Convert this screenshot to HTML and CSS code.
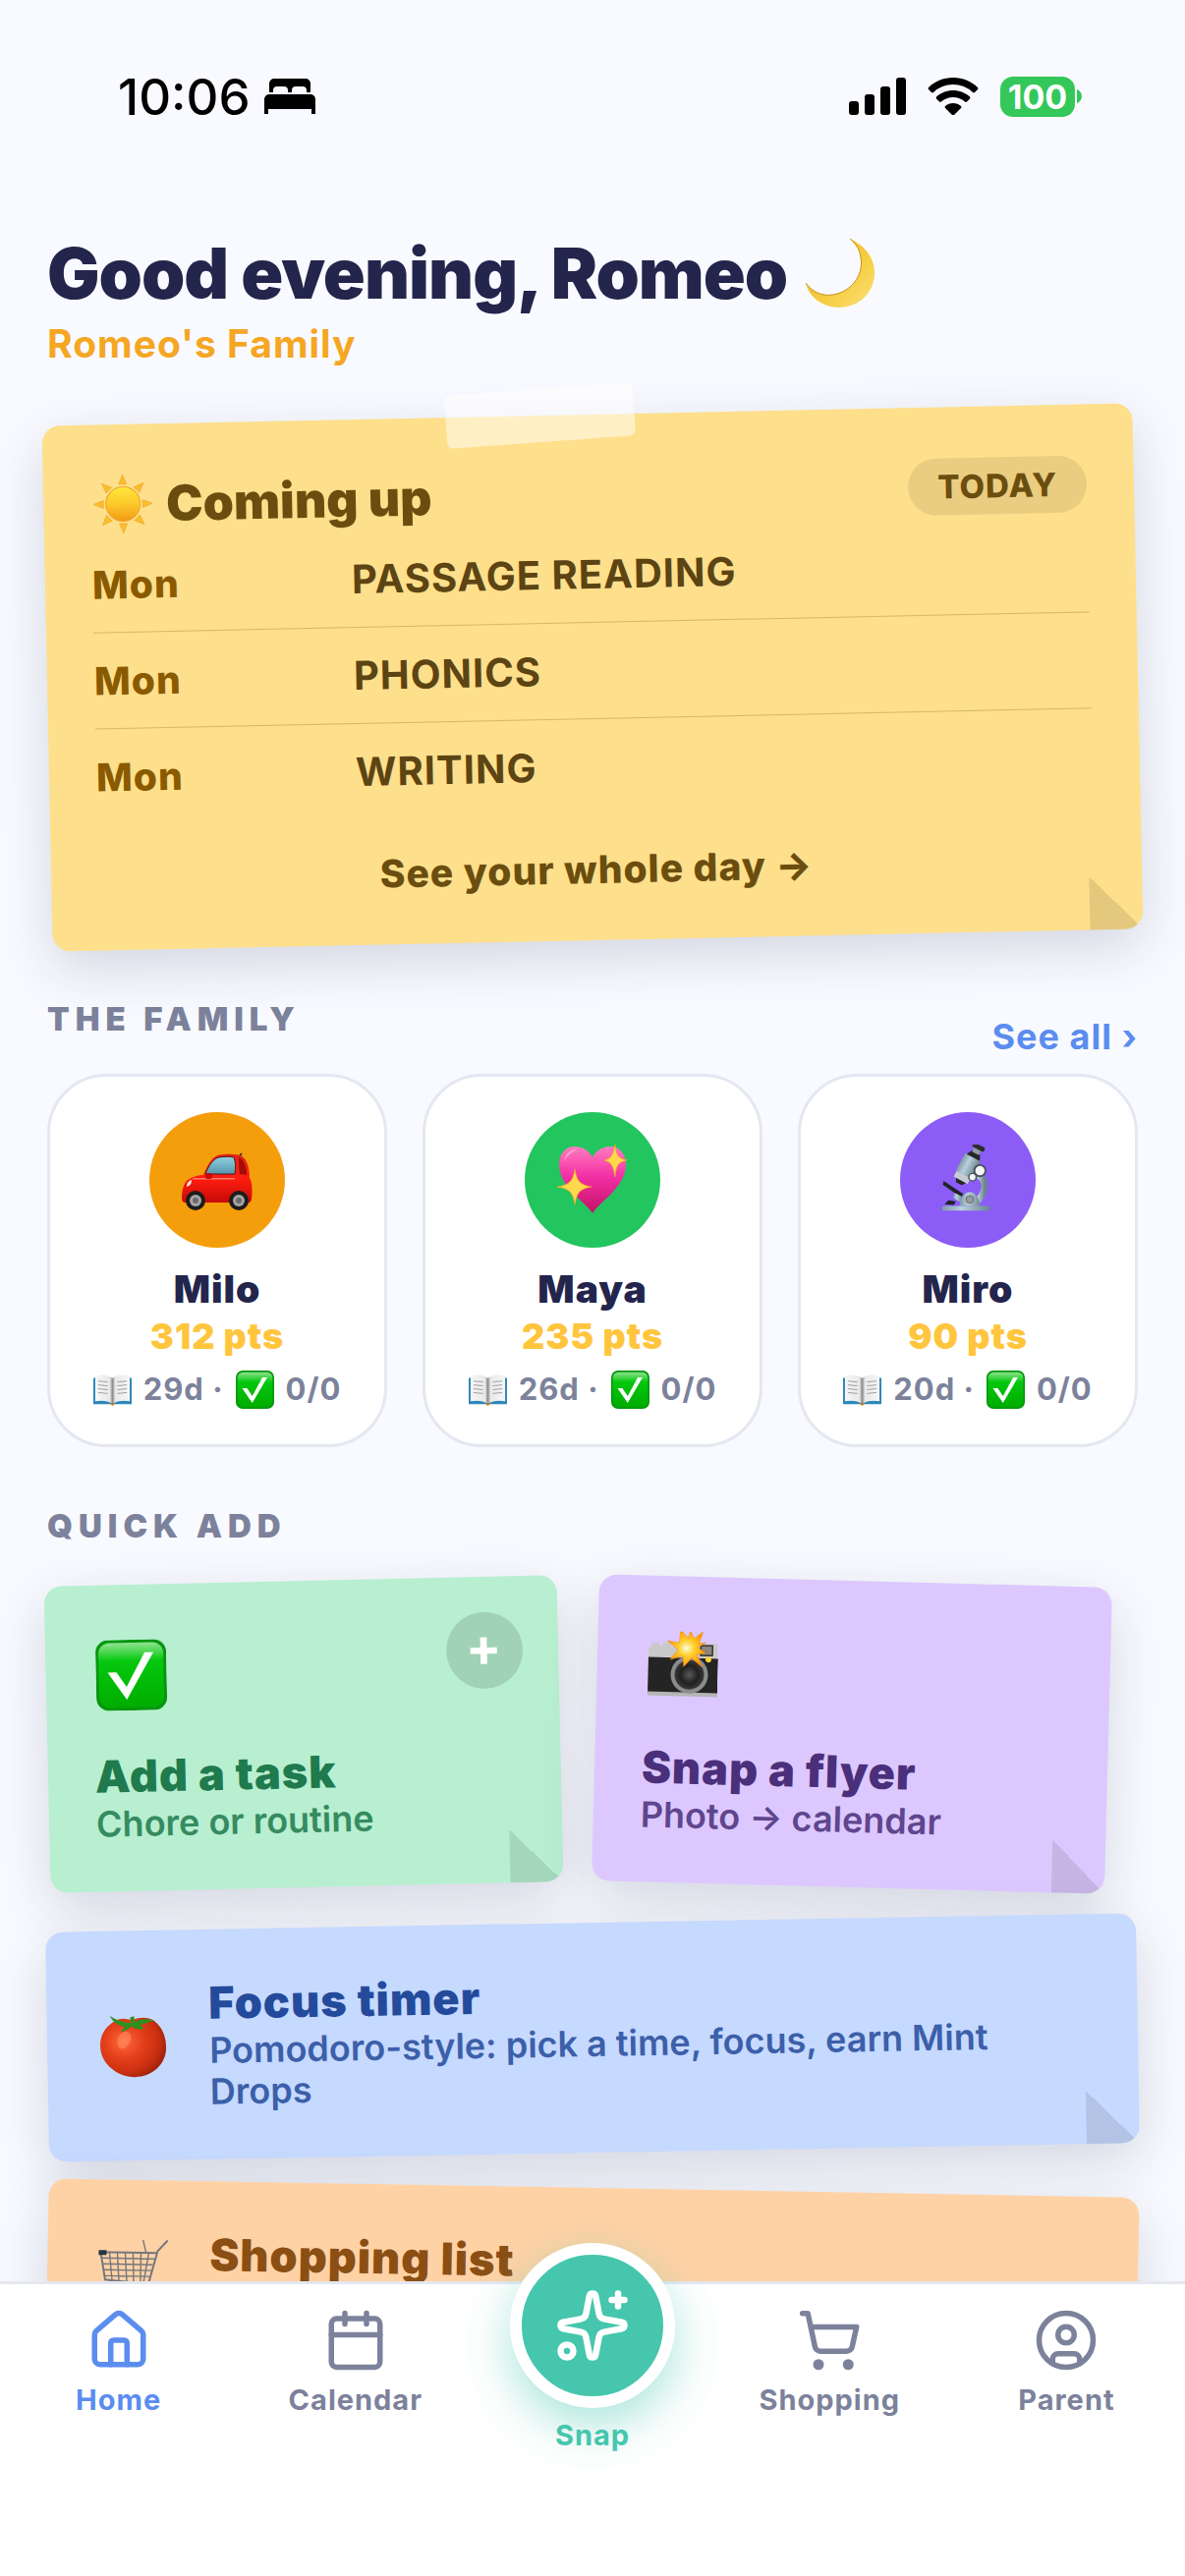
FILE: index.html
```html
<!DOCTYPE html>
<html lang="en">
  <head>
    <meta charset="UTF-8" />
    <meta name="viewport" content="width=device-width, initial-scale=1.0" />
    <title>Family Home</title>
    <link rel="stylesheet" href="styles.css">
  </head>
  <body>
    <svg class="sprite" aria-hidden="true">
      <defs>
        <linearGradient id="gMoon" x1="0" y1="0" x2="1" y2="1">
          <stop offset="0" stop-color="#e2b024" />
          <stop offset="0.6" stop-color="#f7cf43" />
          <stop offset="1" stop-color="#fbe07a" />
        </linearGradient>
        <linearGradient id="gSun" x1="0" y1="0" x2="0" y2="1">
          <stop offset="0" stop-color="#ffe83a" />
          <stop offset="0.5" stop-color="#fcc92a" />
          <stop offset="1" stop-color="#f09a16" />
        </linearGradient>
        <linearGradient id="gCar" x1="0" y1="0" x2="0" y2="1">
          <stop offset="0" stop-color="#e0231a" />
          <stop offset="0.5" stop-color="#ff1d10" />
          <stop offset="1" stop-color="#c40a06" />
        </linearGradient>
        <linearGradient id="gGlass" x1="0" y1="0" x2="0" y2="1">
          <stop offset="0" stop-color="#8fd0de" />
          <stop offset="1" stop-color="#5596ad" />
        </linearGradient>
        <linearGradient id="gHeart" x1="0" y1="0" x2="0" y2="1">
          <stop offset="0" stop-color="#ff7cc0" />
          <stop offset="0.45" stop-color="#f22fa5" />
          <stop offset="1" stop-color="#c51066" />
        </linearGradient>
        <linearGradient id="gSteel" x1="0" y1="0" x2="1" y2="0">
          <stop offset="0" stop-color="#7e99a8" />
          <stop offset="0.4" stop-color="#b8d0dc" />
          <stop offset="1" stop-color="#6c8490" />
        </linearGradient>
        <linearGradient id="gCheck" x1="0" y1="0" x2="0" y2="1">
          <stop offset="0" stop-color="#8fe38f" />
          <stop offset="0.28" stop-color="#05c80e" />
          <stop offset="1" stop-color="#00ac00" />
        </linearGradient>
        <linearGradient id="gPage" x1="0" y1="0" x2="1" y2="0">
          <stop offset="0" stop-color="#f6f6f6" />
          <stop offset="0.42" stop-color="#e9e9e9" />
          <stop offset="0.5" stop-color="#8d8d8d" />
          <stop offset="0.58" stop-color="#e9e9e9" />
          <stop offset="1" stop-color="#f6f6f6" />
        </linearGradient>
        <radialGradient id="gTomato" cx="0.36" cy="0.4" r="0.7">
          <stop offset="0" stop-color="#ff6a3c" />
          <stop offset="0.4" stop-color="#e5401c" />
          <stop offset="0.75" stop-color="#c9300f" />
          <stop offset="1" stop-color="#97200c" />
        </radialGradient>
        <radialGradient id="gLens">
          <stop offset="0" stop-color="#5a5a5a" />
          <stop offset="0.6" stop-color="#202020" />
          <stop offset="1" stop-color="#3a3a3a" />
        </radialGradient>
        <radialGradient id="gFlash">
          <stop offset="0" stop-color="#fffbe0" />
          <stop offset="0.4" stop-color="#ffd22e" />
          <stop offset="1" stop-color="#ff9408" />
        </radialGradient>
      </defs>

      <symbol id="moon" viewBox="0 0 72 72">
        <path fill="url(#gMoon)" d="M46 1C62 8 72 22 71 38C70 57 54 71 35 71C18 71 4 60 1 46C8 56 20 61 33 57C50 52 60 36 57 20C56 12 52 6 46 1z" />
        <path fill="none" stroke="#c9901a" stroke-width="1" d="M1 46C8 56 20 61 33 57C50 52 60 36 57 20C56 12 52 6 46 1" />
      </symbol>

      <symbol id="sun" viewBox="0 0 60 60">
        <g fill="#fbbd2c" stroke="#eda52a" stroke-width="0.6">
          <path id="ray" d="M30 0l4 10h-8z" />
          <use href="#ray" transform="rotate(45 30 30)" />
          <use href="#ray" transform="rotate(90 30 30)" />
          <use href="#ray" transform="rotate(135 30 30)" />
          <use href="#ray" transform="rotate(180 30 30)" />
          <use href="#ray" transform="rotate(225 30 30)" />
          <use href="#ray" transform="rotate(270 30 30)" />
          <use href="#ray" transform="rotate(315 30 30)" />
        </g>
        <circle cx="30" cy="30" r="17.500" fill="url(#gSun)" stroke="#f0a32a" stroke-width="1" />
      </symbol>

      <symbol id="car" viewBox="0 -9 72 72">
        <path d="M57 5l4-5" stroke="#222" stroke-width="1.500" />
        <path fill="url(#gCar)" d="M0 45C0 38 2 30 6 27C12 23 18 22 22 22C26 12 31 3 38 1.500C44 .5 52 .5 58 1.500C65 3 69 12 69 25C72 29 72 40 71 46C71 50 68 51 66 50H4C1 50 0 48 0 45z" />
        <path fill="url(#gGlass)" stroke="#5a1714" stroke-width="1" d="M24 21C27 13 32 5 38 4C43 3 49 3 53 4C55 9 55 15 54 21z" />
        <path fill="#a50b08" d="M58 4C64 7 66 15 66 22L59 21C58 15 58 9 58 4z" />
        <path fill="#ff7a6b" d="M12 25h42v1.500H10z" />
        <rect x="24" y="20" width="7" height="6" rx="2" fill="#c60c08" />
        <path fill="#ffe9dc" d="M5 34c0-4 2-6 5-7c0 4-2 6-5 7z" />
        <circle cx="14" cy="48" r="10" fill="#1c1c1c" />
        <circle cx="14" cy="48" r="6" fill="#a5a5a5" />
        <circle cx="14" cy="48" r="3" fill="#6a6a6a" />
        <circle cx="58" cy="48" r="10" fill="#1c1c1c" />
        <circle cx="58" cy="48" r="6" fill="#a5a5a5" />
        <circle cx="58" cy="48" r="3" fill="#6a6a6a" />
      </symbol>

      <symbol id="heart" viewBox="0 0 72 72">
        <path fill="url(#gHeart)" d="M36 70C31 60 2 44 2 20C2 9 9 2 18 2C27 2 33 7 36 13C39 7 45 2 54 2C63 2 70 9 70 20C70 44 41 60 36 70z" />
        <path fill="#ffb3da" opacity="0.7" d="M7 17C8 9 14 5 20 5C16 8 10 11 7 17z" />
        <g fill="#ffd84d" stroke="#f0a52a" stroke-width="0.700">
          <path d="M18 25C20 37 23 41 35 43C23 45 20 49 18 61C16 49 13 45 0 43C13 41 16 37 18 25z" />
          <path d="M59 0C60 11 62 14 71 16C62 18 60 21 59 33C57 21 55 18 48 16C55 14 57 11 59 0z" />
        </g>
      </symbol>

      <symbol id="microscope" viewBox="-4 -2 76 76">
        <path fill="none" stroke="url(#gSteel)" stroke-width="7" d="M42 29C57 36 54 52 40 62" />
        <path fill="#202426" d="M8 37l21 14l-2 4L7 41z" />
        <path fill="url(#gSteel)" d="M20 50l8 4l-2 6l-8-5z" />
        <path fill="url(#gSteel)" d="M25 64C27 53 31 49 37 49C43 50 46 56 48 64z" />
        <circle cx="36" cy="57" r="4" fill="#9b9b9b" stroke="#586770" stroke-width="1" />
        <rect x="6" y="64" width="52" height="5" rx="2" fill="url(#gSteel)" />
        <path fill="#202426" d="M9 62l4-4l8 1l-2 4z" />
        <g transform="rotate(28 30 26)">
          <rect x="22" y="8" width="19" height="22" rx="3" fill="url(#gSteel)" />
          <rect x="23" y="30" width="17" height="7" fill="#c6ccd0" />
          <path fill="#262626" d="M26 37h12l-3 4h-7z" />
          <path fill="#262626" d="M24 9h16l-3-6H27z" />
          <rect x="28" y="-2" width="8" height="6" fill="#8f9ba2" />
          <rect x="25" y="-6" width="14" height="5" rx="2" fill="#2b2b2b" />
        </g>
        <circle cx="47" cy="26" r="6" fill="#f4f4f4" stroke="#48525a" stroke-width="2" />
        <circle cx="39" cy="33" r="4" fill="#f4f4f4" stroke="#48525a" stroke-width="1.500" />
      </symbol>

      <symbol id="book" viewBox="0 0 40 40">
        <path fill="#2d86b8" d="M0 8l4-1v24l32 0V7l4 1v27H0z" />
        <path fill="url(#gPage)" d="M2 6C8 4 15 4 20 8C25 4 32 4 38 6V32C32 31 25 31 20 35C15 31 8 31 2 32z" />
        <path fill="none" stroke="#9c9c9c" stroke-width="1" d="M5 11l10 1M5 15l10 1M5 19l10 1M5 23l10 1M25 12l10-1M25 16l10-1M25 20l10-1M25 24l10-1" />
        <path fill="#b77a1e" d="M17 34h6l-3 3z" />
      </symbol>

      <symbol id="check" viewBox="0 0 72 72">
        <rect width="72" height="72" rx="13" fill="#07960f" />
        <rect x="3" y="3" width="66" height="66" rx="11" fill="url(#gCheck)" />
        <path fill="#fff" d="M12 33h9l10 15L50 13h9L31 61z" />
      </symbol>

      <symbol id="camera" viewBox="0 2 72 72">
        <path fill="#c9c9c9" d="M4 18v-4h8v3h3v-3h9v4h29v-4h18v18H1V20z" />
        <rect x="1" y="29" width="71" height="37" fill="#242424" />
        <rect x="1" y="64" width="71" height="4" fill="#b5b5b5" />
        <rect x="54" y="16" width="12" height="10" fill="#8f857a" stroke="#333" stroke-width="1.500" />
        <circle cx="43" cy="46" r="19" fill="#8a8c8e" />
        <circle cx="43" cy="46" r="15" fill="url(#gLens)" />
        <circle cx="62" cy="30" r="3" fill="#ffd22e" />
        <path fill="url(#gFlash)" stroke="#f58a08" stroke-width="0.500" d="M33 0l8 9l2-8l4 8l9-7l-4 12l7-1l-8 5l8 6l-9 1l6 13l-11-9l-8 9l-1-11l-13 4l8-10l-11-9l12 2z" />
      </symbol>

      <symbol id="tomato" viewBox="0 0 72 72">
        <path fill="url(#gTomato)" d="M16 12C25 6 30 9 36 10C44 7 52 7 58 11C67 18 70 28 70 38C70 56 55 68 38 68C20 68 3 54 3 36C3 26 7 18 16 12z" />
        <path fill="#ff9b72" opacity="0.45" d="M22 26c4-6 10-6 12-1c2 6-4 14-9 14c-5-1-6-8-3-13z" />
        <path fill="#2f8f1f" d="M34 13C26 12 18 9 13 5C17 13 22 15 28 17L24 22C29 21 32 19 35 16C38 19 43 20 48 19L44 15C49 14 54 12 58 11C51 8 43 9 38 12L38 6L34 7z" />
      </symbol>

      <symbol id="trolley" viewBox="0 0 72 72">
        <g fill="none" stroke="#74777d">
          <path stroke-width="2" d="M71 1L61 12L52 46L8 42L3 14H61" />
          <path stroke-width="1.400" d="M4 20h54M5 26h51M6 32h49M7 38h46M12 14l3 28M20 14l2 29M28 14l2 30M36 14l1 30M44 14v31M52 14l-5 31M46 1l3 12" />
          <path stroke-width="2.500" d="M50 46l-6 10H14" />
        </g>
        <rect x="1" y="12" width="8" height="5" fill="#26343c" />
        <circle cx="18" cy="64" r="5" fill="#444" />
        <circle cx="46" cy="64" r="5" fill="#444" />
      </symbol>
    </svg>

    <div class="app">
      <main class="screen">
        <div class="status-bar">
          <div class="status-left">
            <span class="clock">10:06</span>
            <svg class="bed-icon" viewBox="0 0 52 36">
              <path d="M5 14V5a5 5 0 0 1 5-5h32a5 5 0 0 1 5 5v9h-4v-2a4 4 0 0 0-4-4h-7a4 4 0 0 0-4 4v2h-4v-2a4 4 0 0 0-4-4h-7a4 4 0 0 0-4 4v2z" />
              <path d="M0 36V21a5 5 0 0 1 5-5h42a5 5 0 0 1 5 5v15h-4v-5H4v5z" />
            </svg>
          </div>
          <div class="status-right">
            <svg class="signal-icon" viewBox="0 0 58 38">
              <rect x="0" y="24" width="10" height="14" rx="3" />
              <rect x="16" y="17" width="10" height="21" rx="3" />
              <rect x="32" y="9" width="10" height="29" rx="3" />
              <rect x="48" y="0" width="10" height="38" rx="3" />
            </svg>
            <svg class="wifi-icon" viewBox="0 0 52 38">
              <path d="M26 0C36 0 45 4 51 10a1.500 1.500 0 0 1 0 2l-3 3a1.500 1.500 0 0 1-2 0a29 29 0 0 0-40 0a1.500 1.500 0 0 1-2 0l-3-3a1.500 1.500 0 0 1 0-2C7 4 16 0 26 0z" />
              <path d="M26 13C32.500 13 38.500 15.500 43 19.500a1.500 1.500 0 0 1 0 2l-3 3a1.500 1.500 0 0 1-2 0a18 18 0 0 0-24 0a1.500 1.500 0 0 1-2 0l-3-3a1.500 1.500 0 0 1 0-2C13.500 15.500 19.500 13 26 13z" />
              <path d="M26 26c3 0 6 1 8 3a1.500 1.500 0 0 1 0 2l-7 7a1.500 1.500 0 0 1-2 0l-7-7a1.500 1.500 0 0 1 0-2c2-2 5-3 8-3z" />
            </svg>
            <div class="battery">
              <span class="battery-level">100</span>
              <svg class="battery-tip" viewBox="0 0 5 14"><path d="M0 0c3 1 5 4 5 7s-2 6-5 7z" /></svg>
            </div>
          </div>
        </div>

        <header class="greeting">
          <h1>Good evening, Romeo <svg class="moon"><use href="#moon" /></svg></h1>
          <p>Romeo's Family</p>
        </header>

        <section class="note note-today">
          <span class="tape"></span>
          <div class="note-head">
            <h2><svg class="sun"><use href="#sun" /></svg>Coming up</h2>
            <span class="pill">TODAY</span>
          </div>
          <ul class="agenda">
            <li><span class="day">Mon</span><span class="event">PASSAGE READING</span></li>
            <li><span class="day">Mon</span><span class="event">PHONICS</span></li>
            <li><span class="day">Mon</span><span class="event">WRITING</span></li>
          </ul>
          <a class="day-link" href="#">See your whole day →</a>
          <span class="fold"></span>
        </section>

        <div class="section-head">
          <h3>THE FAMILY</h3>
          <a class="see-all" href="#">See all ›</a>
        </div>
        <div class="family">
          <a class="kid" href="#">
            <span class="avatar orange"><svg><use href="#car" /></svg></span>
            <span class="name">Milo</span>
            <span class="points">312 pts</span>
            <span class="stats"><svg><use href="#book" /></svg><span>29d ·</span><svg><use href="#check" /></svg><span>0/0</span></span>
          </a>
          <a class="kid" href="#">
            <span class="avatar green"><svg><use href="#heart" /></svg></span>
            <span class="name">Maya</span>
            <span class="points">235 pts</span>
            <span class="stats"><svg><use href="#book" /></svg><span>26d ·</span><svg><use href="#check" /></svg><span>0/0</span></span>
          </a>
          <a class="kid" href="#">
            <span class="avatar violet"><svg><use href="#microscope" /></svg></span>
            <span class="name">Miro</span>
            <span class="points">90 pts</span>
            <span class="stats"><svg><use href="#book" /></svg><span>20d ·</span><svg><use href="#check" /></svg><span>0/0</span></span>
          </a>
        </div>

        <div class="section-head">
          <h3>QUICK ADD</h3>
        </div>
        <div class="quick">
          <button type="button" class="note tile tile-task">
            <svg class="emoji"><use href="#check" /></svg>
            <span class="title">Add a task</span>
            <span class="sub">Chore or routine</span>
            <span class="plus">+</span>
            <span class="fold"></span>
          </button>
          <button type="button" class="note tile tile-snap">
            <svg class="emoji"><use href="#camera" /></svg>
            <span class="title">Snap a flyer</span>
            <span class="sub">Photo → calendar</span>
            <span class="fold"></span>
          </button>
          <button type="button" class="note wide wide-focus">
            <svg class="emoji"><use href="#tomato" /></svg>
            <span class="wide-text">
              <span class="title">Focus timer</span>
              <span class="sub">Pomodoro-style: pick a time, focus, earn Mint Drops</span>
            </span>
            <span class="fold"></span>
          </button>
          <button type="button" class="note wide wide-shopping">
            <svg class="emoji"><use href="#trolley" /></svg>
            <span class="wide-text">
              <span class="title">Shopping list</span>
            </span>
            <span class="fold"></span>
          </button>
        </div>
      </main>

      <nav class="tab-bar">
        <a class="tab active" href="#">
          <svg viewBox="0 0 24 24"><path d="M15 21v-8a1 1 0 0 0-1-1h-4a1 1 0 0 0-1 1v8" /><path d="M3 10a2 2 0 0 1 .709-1.528l7-5.999a2 2 0 0 1 2.582 0l7 5.999A2 2 0 0 1 21 10v9a2 2 0 0 1-2 2H5a2 2 0 0 1-2-2z" /></svg>
          <span>Home</span>
        </a>
        <a class="tab" href="#">
          <svg viewBox="0 0 24 24"><path d="M8 2v4M16 2v4M3 10h18" /><rect x="3" y="4" width="18" height="18" rx="2" /></svg>
          <span>Calendar</span>
        </a>
        <button type="button" class="tab snap">
          <span class="snap-circle">
            <svg viewBox="0 0 24 24"><path d="M11.017 2.814a1 1 0 0 1 1.966 0l1.051 5.558a2 2 0 0 0 1.594 1.594l5.558 1.051a1 1 0 0 1 0 1.966l-5.558 1.051a2 2 0 0 0-1.594 1.594l-1.051 5.558a1 1 0 0 1-1.966 0l-1.051-5.558a2 2 0 0 0-1.594-1.594l-5.558-1.051a1 1 0 0 1 0-1.966l5.558-1.051a2 2 0 0 0 1.594-1.594z" /><path d="M20 2v4M22 4h-4" /><circle cx="4" cy="20" r="2" /></svg>
          </span>
          <span>Snap</span>
        </button>
        <a class="tab" href="#">
          <svg viewBox="0 0 24 24"><circle cx="8" cy="21" r="1" /><circle cx="19" cy="21" r="1" /><path d="M2.050 2.050h2l2.660 12.420a2 2 0 0 0 2 1.580h9.780a2 2 0 0 0 1.950-1.570l1.650-7.430H5.120" /></svg>
          <span>Shopping</span>
        </a>
        <a class="tab" href="#">
          <svg viewBox="0 0 24 24"><circle cx="12" cy="12" r="10" /><circle cx="12" cy="10" r="3" /><path d="M7 20.662V19a2 2 0 0 1 2-2h6a2 2 0 0 1 2 2v1.662" /></svg>
          <span>Parent</span>
        </a>
      </nav>
    </div>
  </body>
</html>
```
FILE: styles.css
```css
* {
  box-sizing: border-box;
}
body {
  margin: 0;
  background-color: #f9faff;
  color: #23254d;
  font-family: Inter, "Liberation Sans", sans-serif;
  letter-spacing: 1px;
}
h1,
h2,
h3,
p,
ul {
  margin: 0;
  padding: 0;
}
a {
  color: inherit;
  text-decoration: none;
}
button {
  margin: 0;
  border: none;
  background: none;
  font-family: inherit;
  letter-spacing: inherit;
  text-align: left;
  cursor: pointer;
}
.sprite {
  position: absolute;
  width: 0;
  height: 0;
}

.app {
  display: flex;
  flex-direction: column;
  height: 100vh;
}
.screen {
  flex: 1;
  min-height: 0;
  padding: 0 48px 48px;
  overflow-x: hidden;
  overflow-y: auto;
  scrollbar-width: none;
}

/* Status bar */
.status-bar {
  display: flex;
  justify-content: space-between;
  align-items: center;
  height: 196px;
  padding: 0 57px 0 72px;
  letter-spacing: 0;
}
.status-left,
.status-right {
  display: flex;
  align-items: center;
  color: #000;
}
.status-left {
  gap: 14px;
}
.status-right {
  gap: 22px;
}
.clock {
  font-size: 51px;
  font-weight: 500;
}
.bed-icon {
  width: 52px;
  height: 36px;
}
.signal-icon {
  width: 58px;
  height: 38px;
}
.wifi-icon {
  width: 52px;
  height: 38px;
}
.battery {
  display: flex;
  align-items: center;
  gap: 2px;
}
.battery-level {
  width: 76px;
  border-radius: 13px;
  background-color: #34c759;
  color: white;
  font-size: 34px;
  font-weight: 700;
  line-height: 41px;
  text-align: center;
}
.battery-tip {
  width: 5px;
  height: 14px;
  fill: #34c759;
}

/* Greeting */
.greeting {
  padding: 40px 0 48px;
}
.greeting h1 {
  display: flex;
  align-items: center;
  gap: 18px;
  font-size: 71px;
  font-weight: 900;
  line-height: 84px;
  letter-spacing: -1px;
}
.moon {
  width: 72px;
  height: 72px;
}
.greeting p {
  margin-top: 6px;
  color: #f5a623;
  font-size: 39px;
  font-weight: 700;
  line-height: 48px;
}

/* Sticky notes */
.note {
  position: relative;
  padding: 48px;
  border-radius: 18px;
  box-shadow: 0 18px 54px rgba(20, 30, 70, 0.16);
}
.fold {
  position: absolute;
  right: 0;
  bottom: 0;
  width: 54px;
  height: 54px;
  border-bottom-right-radius: 18px;
  background: linear-gradient(45deg, rgba(0, 0, 0, 0.1) 50%, transparent 50%);
}
.note-today {
  background-color: #fedf8b;
  color: #6b4e0f;
  transform: rotate(-1.2deg);
}
.tape {
  position: absolute;
  top: -27px;
  left: 37%;
  width: 192px;
  height: 54px;
  border-radius: 6px;
  background-color: rgba(255, 255, 255, 0.5);
  transform: rotate(-3deg);
}
.note-head {
  display: flex;
  justify-content: space-between;
  align-items: center;
  height: 66px;
}
.note-head h2 {
  display: flex;
  align-items: center;
  gap: 14px;
  font-size: 50px;
  font-weight: 900;
  letter-spacing: 0;
}
.sun {
  width: 60px;
  height: 60px;
  margin-left: 3px;
}
.pill {
  padding: 0 30px;
  border-radius: 30px;
  background-color: rgba(0, 0, 0, 0.08);
  font-size: 33px;
  font-weight: 800;
  line-height: 58px;
}
.agenda {
  list-style: none;
}
.agenda li {
  display: flex;
  align-items: center;
  padding: 24px 0;
  border-bottom: 1px solid rgba(92, 68, 19, 0.25);
  line-height: 49px;
}
.agenda li:last-child {
  border-bottom: none;
}
.day {
  width: 264px;
  color: #8a5a00;
  font-size: 39px;
  font-weight: 800;
}
.event {
  color: #5c4413;
  font-size: 40px;
  font-weight: 700;
}
.day-link {
  display: block;
  margin-top: 32px;
  font-size: 39px;
  font-weight: 800;
  line-height: 48px;
  text-align: center;
}

/* Section titles */
.section-head {
  display: flex;
  justify-content: space-between;
  align-items: center;
  margin-top: 60px;
}
.section-head h3 {
  margin-bottom: 36px;
  color: #7c829b;
  font-size: 33px;
  font-weight: 900;
  line-height: 40px;
  letter-spacing: 6px;
}
.see-all {
  color: #5b8def;
  font-size: 36px;
  font-weight: 700;
}

/* Family cards */
.family {
  display: flex;
  gap: 36px;
}
.kid {
  display: flex;
  flex: 1;
  flex-direction: column;
  align-items: center;
  padding: 36px 12px;
  border: 3px solid #e5e7f1;
  border-radius: 60px;
  background-color: white;
}
.avatar {
  display: flex;
  align-items: center;
  justify-content: center;
  width: 138px;
  height: 138px;
  border-radius: 50%;
}
.avatar svg {
  width: 72px;
  height: 72px;
}
.orange {
  background-color: #f59e0b;
}
.green {
  background-color: #22c55e;
}
.violet {
  background-color: #8b5cf6;
}
.name {
  margin-top: 18px;
  font-size: 39px;
  font-weight: 900;
  line-height: 48px;
}
.points {
  color: #ffc53d;
  font-size: 36px;
  font-weight: 900;
  line-height: 48px;
}
.stats {
  display: flex;
  align-items: center;
  gap: 12px;
  margin-top: 10px;
  color: #7c829b;
  font-size: 31px;
  font-weight: 700;
  line-height: 40px;
}
.stats svg {
  width: 39px;
  height: 39px;
}

/* Quick add */
.quick {
  display: flex;
  flex-wrap: wrap;
  gap: 36px;
}
.title {
  font-size: 45px;
  font-weight: 900;
  line-height: 54px;
}
.sub {
  font-size: 36px;
  font-weight: 600;
  line-height: 42px;
  letter-spacing: 0;
  opacity: 0.85;
}
.emoji {
  flex: none;
  width: 72px;
  height: 72px;
  margin-left: 3px;
}
.tile {
  display: flex;
  flex-direction: column;
  width: 47%;
}
.tile .emoji {
  margin-top: 8px;
  margin-bottom: 40px;
}
.tile-task {
  background-color: #b8efd1;
  color: #1f7a4d;
  transform: rotate(-1.3deg);
}
.tile-snap {
  background-color: #dcc8fe;
  color: #4a2f7a;
  transform: rotate(1.5deg);
}
.plus {
  position: absolute;
  top: 36px;
  right: 36px;
  width: 78px;
  height: 78px;
  border-radius: 50%;
  background-color: rgba(0, 0, 0, 0.12);
  color: white;
  font-size: 54px;
  font-weight: 700;
  line-height: 72px;
  text-align: center;
}
.wide {
  display: flex;
  align-items: center;
  gap: 42px;
  width: 100%;
}
.wide-text {
  display: flex;
  flex-direction: column;
  padding-right: 36px;
}
.wide-focus {
  background-color: #c6d9ff;
  color: #244a9b;
  transform: rotate(-1deg);
}
.wide-shopping {
  min-height: 192px;
  background-color: #ffd2a6;
  color: #8b4f14;
  transform: rotate(1deg);
}
.wide-shopping .wide-text {
  min-height: 96px;
}

/* Bottom tabs */
.tab-bar {
  position: relative;
  display: flex;
  height: 300px;
  padding-top: 24px;
  border-top: 3px solid #e5e7f1;
  background-color: white;
}
.tab {
  display: flex;
  flex: 1;
  flex-direction: column;
  align-items: center;
  gap: 10px;
  padding: 0;
  color: #7c829b;
  font-size: 29px;
  font-weight: 700;
  line-height: 36px;
}
.tab svg {
  width: 66px;
  height: 66px;
  fill: none;
  stroke: currentColor;
  stroke-width: 2;
  stroke-linecap: round;
  stroke-linejoin: round;
}
.active {
  color: #5b8def;
}
.snap {
  margin-top: -66px;
  color: #45c6ad;
}
.snap-circle {
  display: flex;
  align-items: center;
  justify-content: center;
  width: 168px;
  height: 168px;
  border: 12px solid white;
  border-radius: 50%;
  background-color: #45c6ad;
  box-shadow: 0 18px 48px rgba(69, 198, 173, 0.45);
  color: white;
}
.tab .snap-circle svg {
  width: 78px;
  height: 78px;
}
```
